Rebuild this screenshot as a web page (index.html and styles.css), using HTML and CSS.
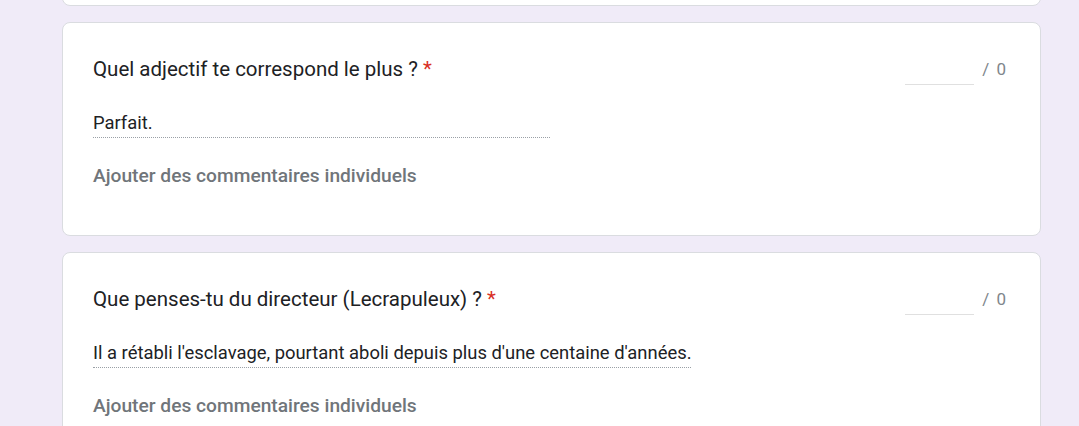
FILE: index.html
```html
<!DOCTYPE html>
<html lang="fr">
<head>
<meta charset="utf-8">
<title>Réponses</title>
<link rel="stylesheet" href="styles.css">
</head>
<body>
<div class="page">
  <div class="card card-top"></div>
  <div class="card">
    <div class="q-row">
      <div class="q-title">Quel adjectif te correspond le plus ? <span class="req">*</span></div>
      <div class="score"><span class="score-input"></span><span class="score-max">/ 0</span></div>
    </div>
    <div class="answer-wrap"><div class="answer">Parfait.</div></div>
    <div class="comment">Ajouter des commentaires individuels</div>
  </div>
  <div class="card">
    <div class="q-row">
      <div class="q-title">Que penses-tu du directeur (Lecrapuleux) ? <span class="req">*</span></div>
      <div class="score"><span class="score-input"></span><span class="score-max">/ 0</span></div>
    </div>
    <div class="answer-wrap"><div class="answer">Il a rétabli l'esclavage, pourtant aboli depuis plus d'une centaine d'années.</div></div>
    <div class="comment">Ajouter des commentaires individuels</div>
  </div>
</div>
</body>
</html>
```

FILE: styles.css
```css
html, body {
  margin: 0;
  padding: 0;
  background: #f0ebf8;
  font-family: Roboto, "Noto Sans", Arial, sans-serif;
  overflow: hidden;
}
.page {
  display: flex;
  flex-direction: column;
  gap: 16px;
  padding: 0 38px 0 62px;
}
.card {
  background: #fff;
  border: 1px solid #dadce0;
  border-radius: 8px;
  padding: 34px 34px 47px 30px;
}
.card-top {
  padding: 0;
  margin-top: -10px;
  height: 14px;
}
.q-row {
  display: flex;
  justify-content: space-between;
  align-items: flex-start;
  height: 24px;
}
.q-title {
  font-size: 20.5px;
  line-height: 24px;
  color: #202124;
}
.req {
  color: #d93025;
}
.score {
  display: flex;
  align-items: flex-start;
  gap: 8px;
}
.score-input {
  display: block;
  width: 69px;
  height: 27px;
  border-bottom: 1px solid #e0e0e0;
}
.score-max {
  font-size: 17px;
  line-height: 24px;
  color: #80868b;
  word-spacing: 3px;
}
.answer-wrap {
  display: flex;
  margin-top: 32px;
}
.answer {
  min-width: 50%;
  font-size: 18.4px;
  line-height: 20px;
  color: #202124;
  padding-bottom: 4px;
  border-bottom: 1px dotted #9aa0a6;
}
.comment {
  margin-top: 26px;
  font-size: 19.2px;
  line-height: 24px;
  font-weight: 500;
  color: #70757a;
}
```
